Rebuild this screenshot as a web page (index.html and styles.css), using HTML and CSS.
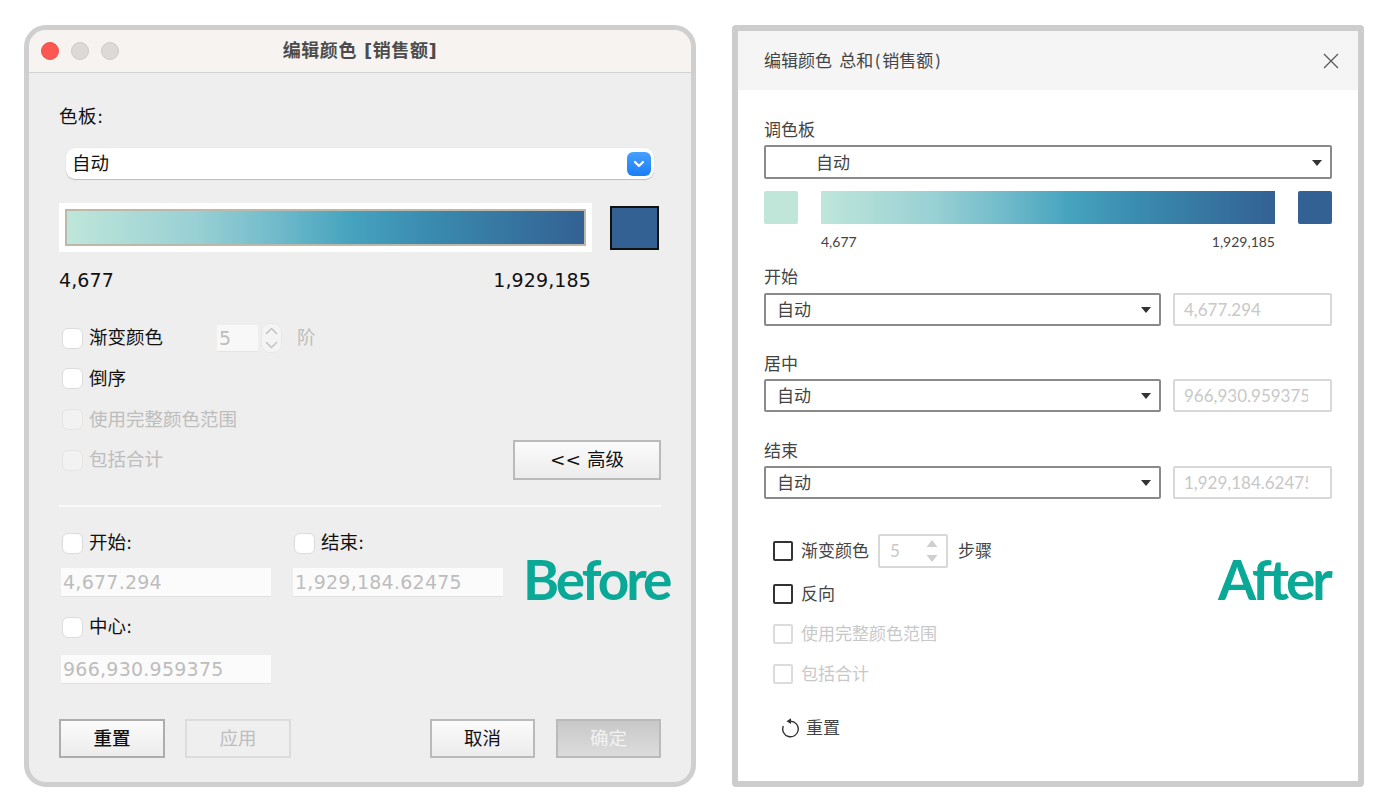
FILE: index.html
```html
<!DOCTYPE html>
<html lang="zh">
<head>
<meta charset="utf-8">
<title>编辑颜色</title>
<link rel="stylesheet" href="styles.css">
</head>
<body>
<main class="page">
  <section class="mac">
    <header class="mac-title">
      <span class="lights"><i class="light red"></i><i class="light"></i><i class="light"></i></span>
      <h1>编辑颜色 [销售额]</h1>
    </header>
    <div class="mac-body">
      <div class="m-label">色板:</div>
      <div class="m-select"><span>自动</span>
        <span class="m-drop"><svg width="14" height="10" viewBox="0 0 14 10"><path d="M3 3l4 4 4-4" fill="none" stroke="#fff" stroke-width="2.2" stroke-linecap="round" stroke-linejoin="round"/></svg></span>
      </div>
      <div class="m-ramp">
        <div class="m-frame"><div class="m-grad"></div></div>
        <div class="m-swatch"></div>
      </div>
      <div class="m-values"><span>4,677</span><span>1,929,185</span></div>
      <div class="m-opts">
        <div class="m-row"><i class="m-check"></i><span class="m-text">渐变颜色</span>
          <span class="m-num">5</span>
          <span class="m-step">
            <svg width="21" height="30" viewBox="0 0 21 30"><path d="M5.500 10.500l5-5 5 5M5.500 19.500l5 5 5-5" fill="none" stroke="#c4c4c4" stroke-width="1.600" stroke-linecap="round" stroke-linejoin="round"/></svg>
          </span>
          <span class="m-text off m-unit">阶</span>
        </div>
        <div class="m-row"><i class="m-check"></i><span class="m-text">倒序</span></div>
        <div class="m-row"><i class="m-check dis"></i><span class="m-text off">使用完整颜色范围</span></div>
        <div class="m-row"><i class="m-check dis"></i><span class="m-text off">包括合计</span>
          <span class="m-btn m-adv">&lt;&lt; 高级</span>
        </div>
      </div>
      <div class="m-rule"></div>
      <div class="m-range">
        <div class="m-col">
          <div class="m-row"><i class="m-check"></i><span class="m-text">开始:</span></div>
          <div class="m-input">4,677.294</div>
        </div>
        <div class="m-col">
          <div class="m-row"><i class="m-check"></i><span class="m-text">结束:</span></div>
          <div class="m-input">1,929,184.62475</div>
        </div>
        <div class="m-col m-center">
          <div class="m-row"><i class="m-check"></i><span class="m-text">中心:</span></div>
          <div class="m-input">966,930.959375</div>
        </div>
      </div>
      <div class="m-actions">
        <span class="m-btn strong">重置</span>
        <span class="m-btn faint">应用</span>
        <span class="m-btn m-cancel">取消</span>
        <span class="m-btn primary">确定</span>
      </div>
    </div>
    <div class="tag tag-before">Before</div>
  </section>

  <section class="web">
    <header class="web-title">
      <h2>编辑颜色 总和<span class="paren">(</span>销售额<span class="paren">)</span></h2>
      <svg width="16" height="16" viewBox="0 0 16 16"><path d="M1 1l14 14M15 1L1 15" stroke="#555" stroke-width="1.200" fill="none"/></svg>
    </header>
    <div class="web-body">
      <div class="w-label first">调色板</div>
      <div class="w-select palette"><span>自动</span><i class="w-caret"></i></div>
      <div class="w-ramp"><div class="w-swatch low"></div><div class="w-grad"></div><div class="w-swatch high"></div></div>
      <div class="w-values"><span>4,677</span><span>1,929,185</span></div>
      <div class="w-label start">开始</div>
      <div class="w-field">
        <div class="w-select"><span>自动</span><i class="w-caret"></i></div>
        <div class="w-input"><span>4,677.294</span></div>
      </div>
      <div class="w-label">居中</div>
      <div class="w-field">
        <div class="w-select"><span>自动</span><i class="w-caret"></i></div>
        <div class="w-input"><span>966,930.959375</span></div>
      </div>
      <div class="w-label end">结束</div>
      <div class="w-field">
        <div class="w-select"><span>自动</span><i class="w-caret"></i></div>
        <div class="w-input"><span>1,929,184.62475</span></div>
      </div>
      <div class="w-opts">
        <div class="w-row steps"><i class="w-check"></i><span>渐变颜色</span>
          <span class="w-num"><span>5</span><svg width="12" height="24" viewBox="0 0 12 24"><path d="M6 1l5.500 7H.5zM6 23L.5 16h11z" fill="#cfcfcf"/></svg></span>
          <span class="w-unit">步骤</span>
        </div>
        <div class="w-row"><i class="w-check"></i><span>反向</span></div>
        <div class="w-row off"><i class="w-check"></i><span>使用完整颜色范围</span></div>
        <div class="w-row off"><i class="w-check"></i><span>包括合计</span></div>
      </div>
      <div class="w-reset">
        <svg width="20" height="20" viewBox="0 0 20 20"><path d="M9.500 3.200a7.800 7.800 0 1 1-7.200 4.800" fill="none" stroke="#333" stroke-width="1.400"/><path d="M5.500 3.200L10 .3v5.800z" fill="#333"/></svg>
        <span>重置</span>
      </div>
    </div>
    <div class="tag tag-after">After</div>
  </section>
</main>
</body>
</html>
```
FILE: styles.css
```css
* { box-sizing: border-box; }
html, body { margin: 0; padding: 0; background: #fff; }
i { display: block; }
.page {
  display: flex;
  gap: 36px;
  width: 1392px;
  height: 810px;
  padding: 25px 28px 23px 24px;
  overflow: hidden;
}

/* Before: macOS dialog */
.mac {
  position: relative;
  width: 672px;
  height: 762px;
  border: 5px solid #cfcfcf;
  border-radius: 22px;
  background: #eeeeee;
  overflow: hidden;
  font-family: "DejaVu Sans", "Noto Sans CJK SC", sans-serif;
  color: #111;
}
.mac-title {
  position: relative;
  display: flex;
  align-items: center;
  justify-content: center;
  height: 43px;
  background: #f6f3f0;
  border-bottom: 1px solid #d2d2d2;
}
.mac-title h1 {
  margin: 0;
  font-size: 18px;
  line-height: 24px;
  font-weight: 700;
  color: #4c4c4c;
  letter-spacing: .6px;
}
.lights {
  position: absolute;
  left: 12px;
  top: 11.500px;
  display: flex;
  gap: 12px;
}
.light {
  width: 18px;
  height: 18px;
  border-radius: 50%;
  background: #dcd9d6;
  border: 1px solid #cdcac7;
}
.light.red { background: #fc5753; border-color: #ef4f4a; }
.mac-body { padding: 0 30px; }
.m-label { margin-top: 32px; height: 24px; font-size: 18.500px; line-height: 24px; letter-spacing: .5px; }
.m-select {
  display: flex;
  align-items: center;
  justify-content: space-between;
  height: 31px;
  margin: 19px 7px 0;
  padding: 0 3px 0 6px;
  background: #fff;
  border-radius: 9px;
  box-shadow: 0 1px 1px #bdbdbd, 0 0 1px #d5d5d5;
  font-size: 18.500px;
  line-height: 24px;
}
.m-drop {
  display: flex;
  align-items: center;
  justify-content: center;
  width: 24px;
  height: 24px;
  border-radius: 6px;
  background: linear-gradient(#48a0ff, #197ef6);
}
.m-ramp { display: flex; align-items: center; margin-top: 24px; }
.m-frame { width: 533px; height: 49px; padding: 6px; background: #fff; }
.m-grad {
  height: 37px;
  border: 2px solid #bdb8a8;
  background: linear-gradient(90deg, #bfe6da 0%, #98d0d4 25%, #72bbcb 40%, #45a3be 55%, #3a8bb0 70%, #336193 100%);
}
.m-swatch {
  width: 49px;
  height: 44px;
  margin-left: 18px;
  background: #336193;
  border: 2px solid #111;
}
.m-values {
  display: flex;
  justify-content: space-between;
  width: 532px;
  height: 24px;
  margin-top: 16px;
  font-size: 19px;
  line-height: 24px;
  letter-spacing: .12px;
}
.m-opts { display: flex; flex-direction: column; gap: 10.800px; margin-top: 31px; }
.m-row { display: flex; align-items: center; height: 30px; }
.m-check {
  flex: none;
  width: 21px;
  height: 21px;
  margin-left: 3px;
  background: #fff;
  border: 1px solid #dcdcdc;
  border-radius: 6px;
}
.m-check.dis { background: #f2f2f2; border-color: #e4e4e4; }
.m-text { margin-left: 6px; font-size: 18.500px; line-height: 24px; white-space: nowrap; }
.m-text.off { color: #bdbdbd; }
.m-num {
  width: 41px;
  height: 27px;
  margin-left: 54px;
  padding-left: 2px;
  background: #f8f8f8;
  border-bottom: 1px solid #e4e4e4;
  color: #bdbdbd;
  font-size: 19px;
  line-height: 27px;
}
.m-step {
  width: 21px;
  height: 30px;
  margin-left: 3px;
  background: #f4f4f4;
  border: 1px solid #e8e8e8;
  border-radius: 9px;
  display: flex;
  align-items: center;
  justify-content: center;
}
.m-step svg { flex: none; }
.m-unit { margin-left: 15px; }
.m-btn {
  display: flex;
  align-items: center;
  justify-content: center;
  flex: none;
  width: 106px;
  height: 39px;
  border: 2px solid #bababa;
  background: linear-gradient(#fbfbfb, #ececec);
  font-size: 18.500px;
  line-height: 24px;
  white-space: nowrap;
}
.m-adv { width: 148px; height: 40px; margin-left: auto; }
.m-btn.strong { border-color: #adadad; font-weight: 500; }
.m-btn.faint { margin-right: 119px; border-color: #dcdcdc; background: #efefef; color: #bdbdbd; }
.m-btn.primary { width: 105px; margin-left: 1px; background: linear-gradient(#c8c8c8, #dcdcdc); color: #f2f2f2; }
.m-cancel { width: 105px; }
.m-rule { height: 2px; margin-top: 30px; background: #f9f9f9; }
.m-range {
  display: grid;
  grid-template-columns: 232px 232px;
  row-gap: 15px;
  margin-top: 21px;
}
.m-center { grid-column: 1; }
.m-input {
  width: 210px;
  height: 29px;
  margin: 10px 0 0 2px;
  padding-left: 2px;
  background: #fbfbfb;
  border-bottom: 1px solid #e2e2e2;
  color: #bdbdbd;
  font-size: 19px;
  line-height: 28px;
  letter-spacing: .25px;
  white-space: nowrap;
}
.m-center .m-input { margin-top: 13px; }
.m-actions { display: flex; gap: 20px; margin-top: 35px; }

/* Annotation tags */
.tag {
  position: absolute;
  font-family: Lato, sans-serif;
  font-weight: 700;
  font-size: 55px;
  line-height: 60px;
  letter-spacing: -3px;
  color: #0aa896;
}
.tag-before { left: 494px; top: 519px; }
.tag-after { left: 480px; top: 518px; }

/* After: web dialog */
.web {
  position: relative;
  width: 632px;
  height: 762px;
  border: 6px solid #cdcdcd;
  border-radius: 4px;
  background: #fff;
  overflow: hidden;
  font-family: Lato, "Noto Sans CJK SC", sans-serif;
  color: #444;
}
.web-title {
  display: flex;
  align-items: center;
  justify-content: space-between;
  height: 59px;
  padding: 0 19px 0 26px;
  background: #f5f5f5;
}
.web-title h2 { margin: 0; font-size: 17px; line-height: 24px; font-weight: 400; color: #444; word-spacing: 3px; }
.paren { padding: 0 2.200px; }
.web-body { padding: 0 26px; }
.w-label { height: 24px; margin-top: 26px; font-size: 17px; line-height: 24px; }
.w-label.first { margin-top: 28px; }
.w-label.start { margin: 14px 0 4px; }
.w-label.end { margin-top: 27px; }
.w-select {
  display: flex;
  align-items: center;
  justify-content: space-between;
  flex: 1;
  height: 33px;
  margin-top: 3px;
  padding: 0 8px 0 11px;
  border: 2px solid #8a8a8a;
  border-radius: 2px;
  font-size: 17px;
  line-height: 24px;
}
.w-select.palette { flex: none; height: 34px; padding: 1px 8px 0 50px; }
.w-caret {
  width: 0;
  height: 0;
  border-left: 5.500px solid transparent;
  border-right: 5.500px solid transparent;
  border-top: 6.500px solid #333;
}
.w-ramp { display: flex; gap: 23px; height: 33px; margin-top: 12px; }
.w-swatch { flex: none; width: 34px; border-radius: 2px; }
.w-swatch.low { background: #c0e6da; }
.w-swatch.high { background: #336193; }
.w-grad {
  flex: 1;
  background: linear-gradient(90deg, #bfe6da 0%, #98d0d4 25%, #72bbcb 40%, #45a3be 55%, #3a8bb0 70%, #336193 100%);
}
.w-values {
  display: flex;
  justify-content: space-between;
  height: 18px;
  margin: 9px 57px 0;
  font-size: 14px;
  line-height: 18px;
}
.w-field { display: flex; gap: 12px; margin-top: 3px; }
.w-field .w-select { margin-top: 0; }
.w-input {
  flex: none;
  width: 159px;
  height: 33px;
  padding: 0 22.500px 0 9px;
  border: 2px solid #d8d8d8;
  border-radius: 2px;
  color: #c8c8c8;
  font-size: 17px;
  line-height: 29px;
  white-space: nowrap;
}
.w-input span { display: block; overflow: hidden; }
.w-opts { display: flex; flex-direction: column; gap: 10px; margin-top: 37px; }
.w-row { display: flex; align-items: center; height: 30px; padding-left: 9px; font-size: 17px; line-height: 24px; }
.w-row.steps { margin-bottom: 2.500px; }
.w-row.off { color: #c8c8c8; }
.w-check {
  flex: none;
  width: 20px;
  height: 20px;
  margin-right: 8px;
  border: 2px solid #333;
  border-radius: 2px;
}
.w-row.off .w-check { border-color: #dcdcdc; }
.w-num {
  display: flex;
  align-items: center;
  justify-content: space-between;
  width: 70px;
  height: 34px;
  margin-left: 9px;
  padding: 0 8px 0 10px;
  border: 2px solid #d8d8d8;
  border-radius: 2px;
  color: #c8c8c8;
}
.w-unit { margin-left: 10px; }
.w-reset {
  display: flex;
  align-items: center;
  gap: 5px;
  height: 24px;
  margin: 27px 0 0 17px;
  font-size: 17px;
  line-height: 24px;
}
```
